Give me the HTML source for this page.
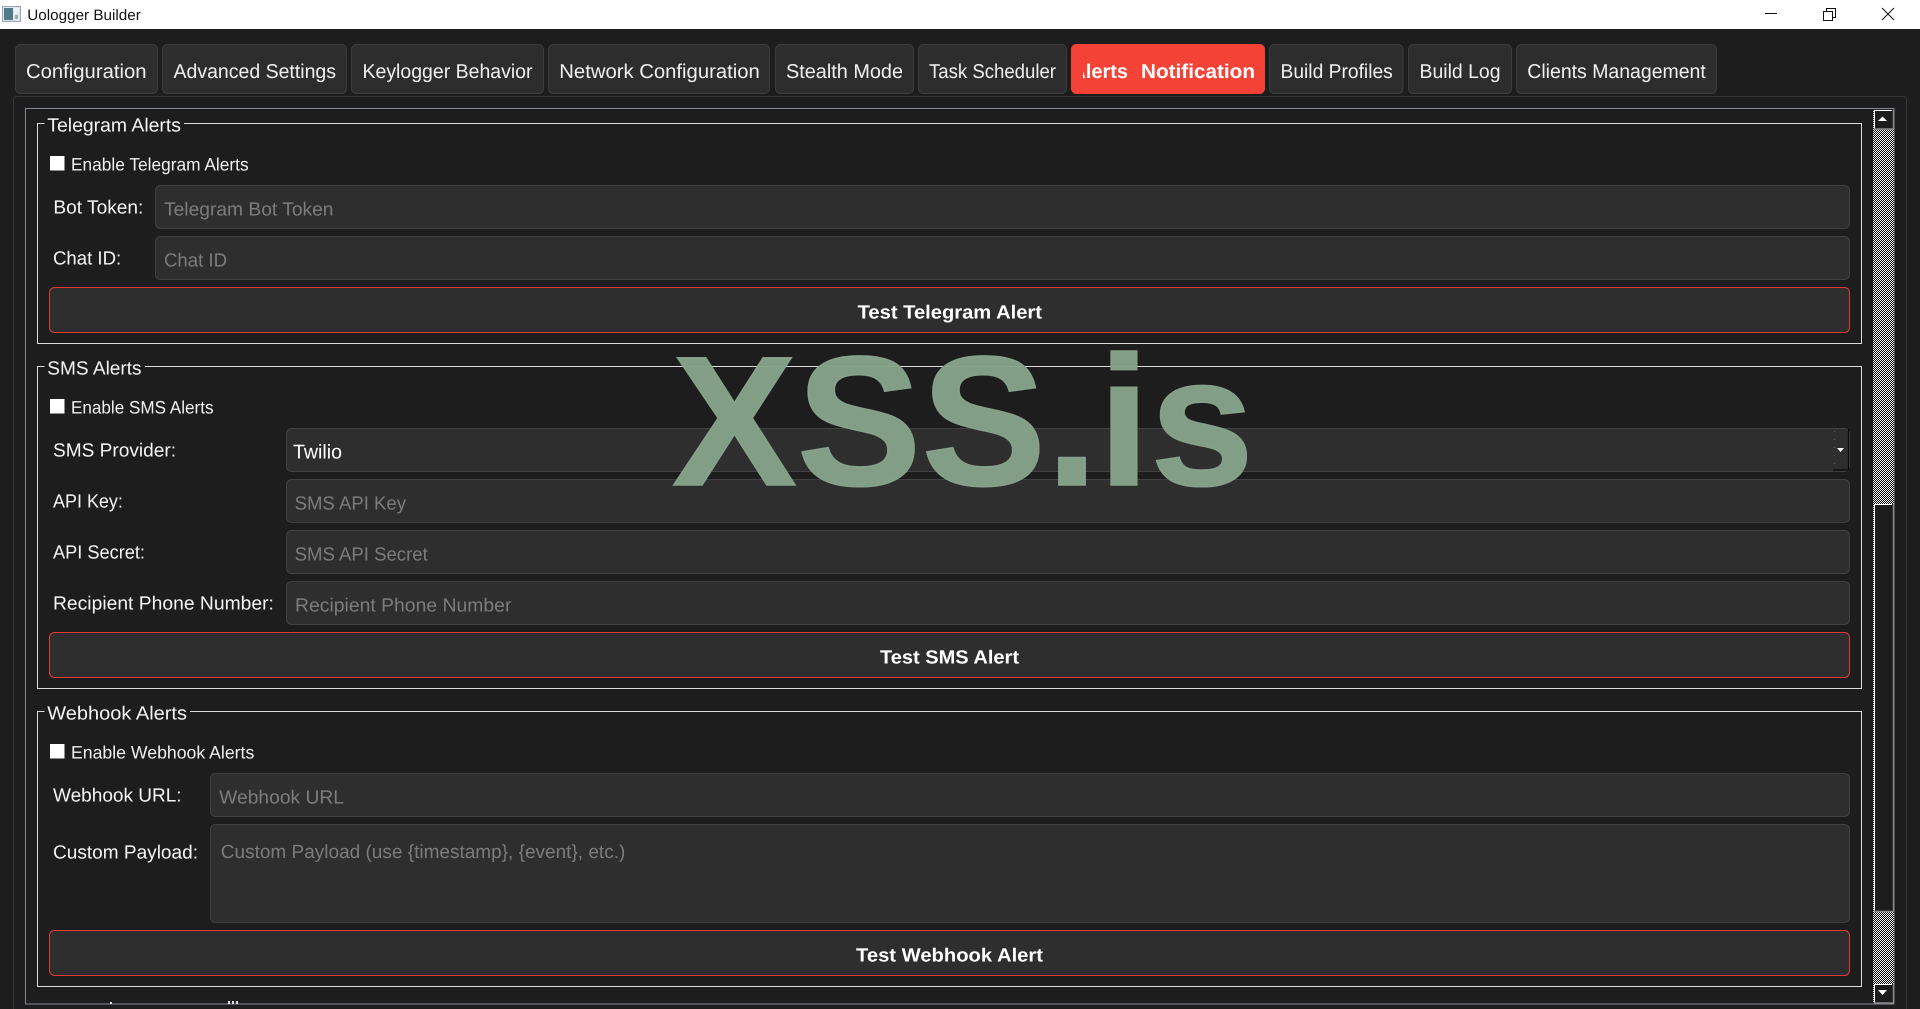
<!DOCTYPE html>
<html><head><meta charset="utf-8"><title>Uologger Builder</title>
<style>
html,body{margin:0;padding:0;background:#1d1d1d;width:1920px;height:1009px;overflow:hidden}
svg{display:block;position:absolute;left:0;top:0}
text{font-family:"Liberation Sans",Arial,sans-serif;text-rendering:geometricPrecision}
.tab{fill:#2d2d2d;stroke:#3c3c3c;stroke-width:1}
.tt{font-size:20px;fill:#f0f0f0}
.inp{fill:#2e2e2e;stroke:#404040;stroke-width:1}
.btn{fill:#2e2e2e;stroke:#e53935;stroke-width:1}
.gb{font-size:19px;fill:#f5f5f5}
.cb{font-size:18px;fill:#f0f0f0}
.lb{font-size:19px;fill:#f5f5f5}
.ph{font-size:19px;fill:#7c7c7c}
.bt{font-size:19px;font-weight:bold;fill:#fff}
.gl{fill:none;stroke:#dcdcdc;stroke-width:1}
</style></head><body>
<svg width="1920" height="1009" viewBox="0 0 1920 1009" xmlns="http://www.w3.org/2000/svg">
<defs>
<pattern id="chk" width="2" height="2" patternUnits="userSpaceOnUse">
<rect width="2" height="2" fill="#000"/><rect width="1" height="1" fill="#fff"/><rect x="1" y="1" width="1" height="1" fill="#fff"/>
</pattern>
<clipPath id="alertclip"><rect x="1083" y="44" width="175" height="50"/></clipPath>
<clipPath id="viewclip"><rect x="26" y="109" width="1847" height="895"/></clipPath>
</defs>
<rect width="1920" height="1009" fill="#1d1d1d"/>

<!-- Title bar -->
<rect width="1920" height="29" fill="#fff"/>
<rect x="2.5" y="6.5" width="18" height="15" fill="#dfe6ee" stroke="#9aa3ad"/>
<rect x="4" y="8" width="9" height="12" fill="#4f7a8c"/>
<rect x="14" y="8" width="5" height="5" fill="#f2f2f2"/>
<rect x="15" y="15" width="3" height="4" fill="#9fb0a0"/>
<text x="27.3" y="20" font-size="15" fill="#111" textLength="113.5" lengthAdjust="spacingAndGlyphs">Uologger Builder</text>
<path d="M1765 13.5H1777" stroke="#111" stroke-width="1" fill="none"/>
<path d="M1823.5 11.5H1832.5V20.5H1823.5ZM1826.5 11.5V8.5H1835.5V17.5H1832.5" stroke="#111" stroke-width="1" fill="none"/>
<path d="M1882 8L1894 20M1894 8L1882 20" stroke="#111" stroke-width="1" fill="none"/>

<!-- Tabs -->
<rect class="tab" x="15.5" y="44.5" width="142" height="49" rx="5"/>
<rect class="tab" x="162.5" y="44.5" width="184" height="49" rx="5"/>
<rect class="tab" x="351.5" y="44.5" width="192" height="49" rx="5"/>
<rect class="tab" x="548.5" y="44.5" width="221" height="49" rx="5"/>
<rect class="tab" x="775.5" y="44.5" width="138" height="49" rx="5"/>
<rect class="tab" x="918.5" y="44.5" width="148" height="49" rx="5"/>
<rect x="1071.5" y="44.5" width="193" height="49" rx="5" fill="#f44336" stroke="#f44336"/>
<rect class="tab" x="1269.5" y="44.5" width="133.5" height="49" rx="5"/>
<rect class="tab" x="1408.5" y="44.5" width="103" height="49" rx="5"/>
<rect class="tab" x="1516.5" y="44.5" width="200" height="49" rx="5"/>
<text class="tt" x="26" y="77.8" textLength="120.5" lengthAdjust="spacingAndGlyphs">Configuration</text>
<text class="tt" x="173.5" y="77.8" textLength="162.5" lengthAdjust="spacingAndGlyphs">Advanced Settings</text>
<text class="tt" x="362.5" y="77.8" textLength="170" lengthAdjust="spacingAndGlyphs">Keylogger Behavior</text>
<text class="tt" x="559.3" y="77.8" textLength="200.5" lengthAdjust="spacingAndGlyphs">Network Configuration</text>
<text class="tt" x="786" y="77.8" textLength="117" lengthAdjust="spacingAndGlyphs">Stealth Mode</text>
<text class="tt" x="929" y="77.8" textLength="127" lengthAdjust="spacingAndGlyphs">Task Scheduler</text>
<g clip-path="url(#alertclip)">
<text x="1071.5" y="77.8" font-size="20" font-weight="bold" fill="#fff" textLength="56.5" lengthAdjust="spacingAndGlyphs">Alerts</text>
<text x="1141" y="77.8" font-size="20" font-weight="bold" fill="#fff" textLength="114" lengthAdjust="spacingAndGlyphs">Notification</text>
</g>
<text class="tt" x="1280.5" y="77.8" textLength="112.3" lengthAdjust="spacingAndGlyphs">Build Profiles</text>
<text class="tt" x="1419.5" y="77.8" textLength="81" lengthAdjust="spacingAndGlyphs">Build Log</text>
<text class="tt" x="1527.3" y="77.8" textLength="178.5" lengthAdjust="spacingAndGlyphs">Clients Management</text>

<!-- Pane and scroll frame -->
<path d="M13.5 1009V100Q13.5 96.5 17 96.5H1903Q1906.5 96.5 1906.5 100V1009" fill="none" stroke="#353535"/>
<rect x="25.5" y="108.5" width="1868.5" height="895.5" fill="#1d1d1d" stroke="#858b96"/>

<g clip-path="url(#viewclip)">
<!-- Telegram group -->
<path class="gl" d="M44.5 123.5H37.5V343.5H1861.5V123.5H184"/>
<text class="gb" x="47.3" y="131.3" textLength="133.7" lengthAdjust="spacingAndGlyphs">Telegram Alerts</text>
<rect x="50" y="156" width="14.5" height="14.5" fill="#fff"/>
<text class="cb" x="71" y="170.5" textLength="177.6" lengthAdjust="spacingAndGlyphs">Enable Telegram Alerts</text>
<text class="lb" x="53.4" y="213.4" textLength="89.9" lengthAdjust="spacingAndGlyphs">Bot Token:</text>
<rect class="inp" x="155.5" y="185.5" width="1694" height="43" rx="5"/>
<text class="ph" x="164" y="215.5" textLength="169.5" lengthAdjust="spacingAndGlyphs">Telegram Bot Token</text>
<text class="lb" x="53" y="264.4" textLength="68.2" lengthAdjust="spacingAndGlyphs">Chat ID:</text>
<rect class="inp" x="155.5" y="236.5" width="1694" height="43" rx="5"/>
<text class="ph" x="164" y="266.5" textLength="63" lengthAdjust="spacingAndGlyphs">Chat ID</text>
<rect class="btn" x="49.5" y="287.5" width="1800" height="45" rx="5"/>
<text class="bt" x="857.6" y="318.6" textLength="184.4" lengthAdjust="spacingAndGlyphs">Test Telegram Alert</text>

<!-- SMS group -->
<path class="gl" d="M44.5 366.5H37.5V688.5H1861.5V366.5H145"/>
<text class="gb" x="47.3" y="374.3" textLength="94.3" lengthAdjust="spacingAndGlyphs">SMS Alerts</text>
<rect x="50" y="399" width="14.5" height="14.5" fill="#fff"/>
<text class="cb" x="71" y="413.5" textLength="142.5" lengthAdjust="spacingAndGlyphs">Enable SMS Alerts</text>
<text class="lb" x="53" y="456.4" textLength="123" lengthAdjust="spacingAndGlyphs">SMS Provider:</text>
<rect class="inp" x="286.5" y="428.5" width="1563" height="43" rx="5"/>
<text x="293" y="458.6" font-size="20" fill="#fff" textLength="49" lengthAdjust="spacingAndGlyphs">Twilio</text>
<path d="M1834.5 431V469" stroke="#555" stroke-dasharray="1 7" fill="none"/>
<path d="M1848.5 429V470M1833 470H1848" stroke="#0a0a0a" stroke-width="1.2" fill="none"/>
<path d="M1837 448H1844L1840.5 452Z" fill="#fff"/>
<text class="lb" x="53" y="507.4" textLength="69.9" lengthAdjust="spacingAndGlyphs">API Key:</text>
<rect class="inp" x="286.5" y="479.5" width="1563" height="43" rx="5"/>
<text class="ph" x="294.6" y="509.5" textLength="111.4" lengthAdjust="spacingAndGlyphs">SMS API Key</text>
<text class="lb" x="53" y="558.4" textLength="92" lengthAdjust="spacingAndGlyphs">API Secret:</text>
<rect class="inp" x="286.5" y="530.5" width="1563" height="43" rx="5"/>
<text class="ph" x="294.6" y="560.5" textLength="133.2" lengthAdjust="spacingAndGlyphs">SMS API Secret</text>
<text class="lb" x="53" y="609.4" textLength="220.9" lengthAdjust="spacingAndGlyphs">Recipient Phone Number:</text>
<rect class="inp" x="286.5" y="581.5" width="1563" height="43" rx="5"/>
<text class="ph" x="295" y="611.5" textLength="216.4" lengthAdjust="spacingAndGlyphs">Recipient Phone Number</text>
<rect class="btn" x="49.5" y="632.5" width="1800" height="45" rx="5"/>
<text class="bt" x="880" y="663.6" textLength="139" lengthAdjust="spacingAndGlyphs">Test SMS Alert</text>

<!-- Webhook group -->
<path class="gl" d="M44.5 711.5H37.5V986.5H1861.5V711.5H190"/>
<text class="gb" x="47.3" y="719.3" textLength="139.7" lengthAdjust="spacingAndGlyphs">Webhook Alerts</text>
<rect x="50" y="744" width="14.5" height="14.5" fill="#fff"/>
<text class="cb" x="71" y="758.5" textLength="183.3" lengthAdjust="spacingAndGlyphs">Enable Webhook Alerts</text>
<text class="lb" x="53" y="801.4" textLength="128.6" lengthAdjust="spacingAndGlyphs">Webhook URL:</text>
<rect class="inp" x="210.5" y="773.5" width="1639" height="43" rx="5"/>
<text class="ph" x="219.2" y="803.5" textLength="124.8" lengthAdjust="spacingAndGlyphs">Webhook URL</text>
<text class="lb" x="53" y="858.4" textLength="145" lengthAdjust="spacingAndGlyphs">Custom Payload:</text>
<rect class="inp" x="210.5" y="824.5" width="1639" height="98" rx="5"/>
<text class="ph" x="220.8" y="857.8" textLength="404.5" lengthAdjust="spacingAndGlyphs">Custom Payload (use {timestamp}, {event}, etc.)</text>
<rect class="btn" x="49.5" y="930.5" width="1800" height="45" rx="5"/>
<text class="bt" x="856" y="961.6" textLength="187" lengthAdjust="spacingAndGlyphs">Test Webhook Alert</text>

<!-- clipped next group title -->
<rect x="110" y="1002" width="2" height="2" fill="#ddd"/>
<rect x="228" y="1001" width="2" height="3" fill="#ddd"/>
<rect x="232" y="1001" width="2" height="3" fill="#ddd"/>
<rect x="236" y="1001" width="2" height="3" fill="#ddd"/>
</g>

<!-- Scrollbar -->
<rect x="1873" y="110" width="21" height="893" fill="url(#chk)"/>
<rect x="1874" y="110" width="19" height="19" fill="#1d1d1d"/>
<path d="M1874.5 129V110.5H1892" stroke="#fff" fill="none"/>
<path d="M1874 129H1893.5V110" stroke="#8a8a8a" stroke-width="1.4" fill="none"/>
<path d="M1882.5 116.5L1887 121H1878Z" fill="#fff"/>
<rect x="1874" y="504" width="19" height="408" fill="#1d1d1d"/>
<path d="M1874.5 912V504.5H1892" stroke="#fff" fill="none"/>
<path d="M1874 911.5H1893.5V504" stroke="#8a8a8a" stroke-width="1.4" fill="none"/>
<rect x="1874" y="984" width="19" height="19" fill="#1d1d1d"/>
<path d="M1874.5 1003V984.5H1892" stroke="#fff" fill="none"/>
<path d="M1874 1003H1893.5V984" stroke="#8a8a8a" stroke-width="1.4" fill="none"/>
<path d="M1878 990H1887L1882.5 995Z" fill="#fff"/>

<!-- Watermark -->
<text x="672" y="485" font-size="185" font-weight="bold" fill="#87a38b" fill-opacity="0.96" stroke="#87a38b" stroke-opacity="0.96" stroke-width="1.5" textLength="582" lengthAdjust="spacingAndGlyphs">XSS.is</text>
</svg>
</body></html>
